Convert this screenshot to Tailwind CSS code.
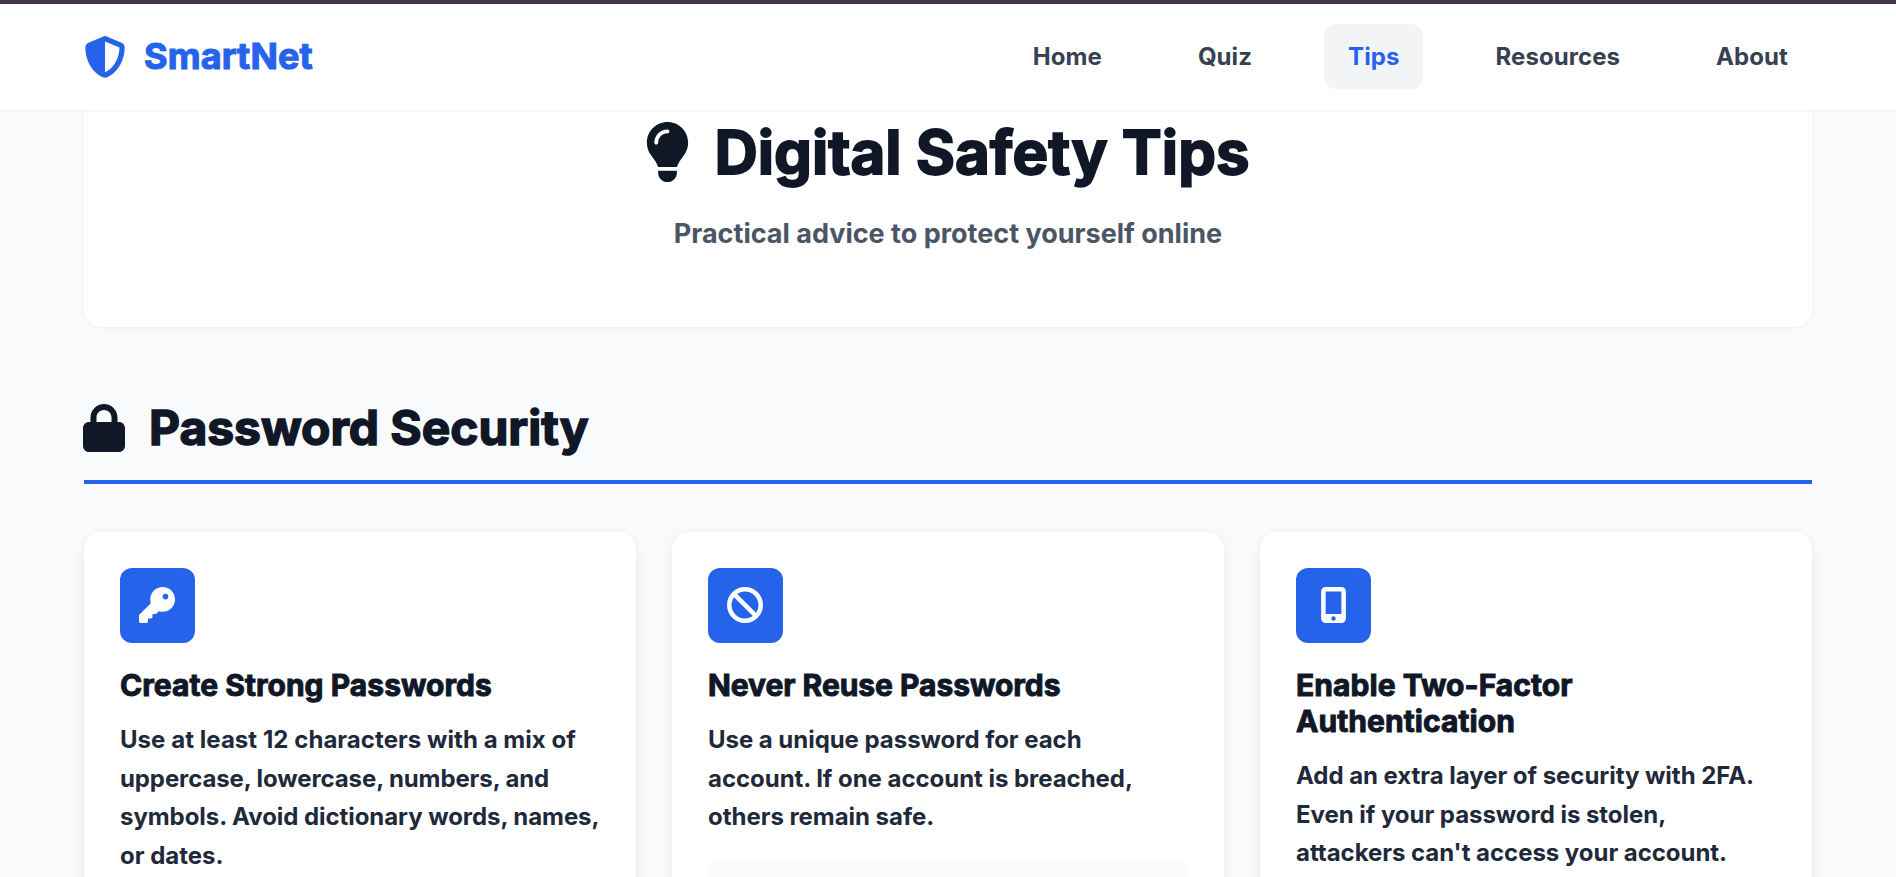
<!DOCTYPE html>
<html lang="en">
<head>
    <meta charset="UTF-8">
    <meta name="viewport" content="width=device-width, initial-scale=1.0">
    <title>Digital Safety Tips - SmartNet</title>

    <!-- Tailwind CSS -->
    <script src="https://cdn.jsdelivr.net/npm/@tailwindcss/browser@4"></script>
</head>
<body class="h-screen overflow-hidden bg-[#f9fafb] font-['Inter',sans-serif] font-bold text-[24px] leading-[38.6px] text-gray-800">

    <!-- Navbar -->
    <header class="relative z-10 h-[110px] border-t-4 border-[#433649] bg-white pb-px shadow-[0_1px_3px_rgba(0,0,0,0.06)]">
        <nav class="mx-auto flex h-full w-[1728px] items-center justify-between">
            <a href="#" class="flex items-center gap-[18px] text-[36px] leading-none text-[#2563eb]">
                <svg class="size-[42px]" viewBox="0 0 512 512" fill="currentColor"><path d="M256 0c4.600 0 9.200 1 13.400 2.900L457.700 82.800c22 9.300 38.400 31 38.300 57.200c-.5 99.200-41.300 280.700-213.600 363.200c-16.700 8-36.100 8-52.800 0C57.300 420.700 16.500 239.200 16 140c-.1-26.200 16.300-47.900 38.300-57.200L242.700 2.900C246.800 1 251.400 0 256 0zm0 66.800V444.800C394 378 431.100 230.100 432 141.400L256 66.800z"/></svg>
                <span class="-mt-px tracking-[0.1px] [-webkit-text-stroke:1.1px_currentColor]">SmartNet</span>
            </a>
            <ul class="flex items-center gap-12 tracking-[0.08px] text-[#374151]">
                <li><a href="#" class="flex h-[65px] items-center rounded-xl px-6 pt-0.5">Home</a></li>
                <li><a href="#" class="flex h-[65px] items-center rounded-xl px-6 pt-0.5">Quiz</a></li>
                <li><a href="#" class="flex h-[65px] items-center rounded-xl bg-gray-100 px-6 pt-0.5 text-[#2563eb]">Tips</a></li>
                <li><a href="#" class="flex h-[65px] items-center rounded-xl px-6 pt-0.5">Resources</a></li>
                <li><a href="#" class="flex h-[65px] items-center rounded-xl px-6 pt-0.5">About</a></li>
            </ul>
        </nav>
    </header>

    <main class="mx-auto w-[1728px]">
        <!-- Page title -->
        <section class="flex h-[217px] flex-col items-center rounded-b-[18px] bg-white pt-[6px] shadow-[0_1px_3px_rgba(0,0,0,0.06)]">
            <h1 class="flex items-center gap-6 pr-px text-[60px] leading-[72px] text-gray-900 [-webkit-text-stroke:1.8px_currentColor]">
                <svg class="-mt-px h-[60px] w-[45px]" viewBox="0 0 384 512" fill="currentColor"><path d="M272 384c9.600-31.900 29.500-59.100 49.200-86.200c5.200-7.100 10.400-14.200 15.400-21.400c19.800-28.500 31.400-63 31.400-100.300C368 78.800 289.200 0 192 0S16 78.800 16 176c0 37.300 11.600 71.900 31.400 100.300c5 7.200 10.200 14.300 15.400 21.400c19.800 27.100 39.700 54.400 49.200 86.200H272zM192 512c44.200 0 80-35.800 80-80V416H112v16c0 44.200 35.800 80 80 80zM112 176c0 8.800-7.200 16-16 16s-16-7.200-16-16c0-61.900 50.100-112 112-112c8.800 0 16 7.200 16 16s-7.200 16-16 16c-44.200 0-80 35.800-80 80z"/></svg>
                <span>Digital Safety Tips</span>
            </h1>
            <p class="mt-[27px] text-[27px] text-gray-600">Practical advice to protect yourself online</p>
        </section>

        <!-- Password security -->
        <section class="mt-[72px]">
            <h2 class="flex h-[85px] items-start border-b-4 border-[#2563eb] text-[48px] leading-[58px] tracking-[-0.04px] text-gray-900 [-webkit-text-stroke:1.5px_currentColor]">
                <svg class="-ml-px mt-[5px] mr-6 h-[48px] w-[42px]" viewBox="0 0 448 512" fill="currentColor"><path d="M144 144v48H304V144c0-44.200-35.800-80-80-80s-80 35.800-80 80zM80 192V144C80 64.500 144.500 0 224 0s144 64.500 144 144v48h16c35.300 0 64 28.700 64 64V448c0 35.300-28.700 64-64 64H64c-35.300 0-64-28.700-64-64V256c0-35.300 28.700-64 64-64H80z"/></svg>
                <span>Password Security</span>
            </h2>

            <div class="mt-12 grid grid-cols-3 gap-9">
                <article class="h-[500px] rounded-[18px] bg-white p-9 shadow-[0_4px_12px_rgba(0,0,0,0.08)]">
                    <div class="flex size-[75px] items-center justify-center rounded-xl bg-[#2563eb] pr-px pb-px text-white">
                        <svg class="size-9" viewBox="0 0 512 512" fill="currentColor"><path d="M336 352c97.200 0 176-78.800 176-176S433.200 0 336 0S160 78.800 160 176c0 18.700 2.900 36.800 8.300 53.700L7 391c-4.500 4.500-7 10.600-7 17v80c0 13.300 10.700 24 24 24h80c13.300 0 24-10.700 24-24V448h40c13.300 0 24-10.700 24-24V384h40c6.400 0 12.500-2.500 17-7l33.300-33.300c16.900 5.400 35 8.300 53.700 8.300zM376 96a40 40 0 1 1 0 80 40 40 0 1 1 0-80z"/></svg>
                    </div>
                    <h3 class="mt-6 text-[30px] leading-9 tracking-[0.04px] text-gray-900 [-webkit-text-stroke:1px_currentColor]">Create Strong Passwords</h3>
                    <p class="mt-[18px] whitespace-nowrap">
                        <span class="tracking-[0.05px]">Use at least 12 characters with a mix of</span><br>
                        <span class="tracking-[-0.1px]">uppercase, lowercase, numbers, and</span><br>
                        <span class="tracking-[-0.06px]">symbols. Avoid dictionary words, names,</span><br>
                        or dates.
                    </p>
                </article>
                <article class="h-[500px] rounded-[18px] bg-white p-9 shadow-[0_4px_12px_rgba(0,0,0,0.08)]">
                    <div class="flex size-[75px] items-center justify-center rounded-xl bg-[#2563eb] pr-px pb-px text-white">
                        <svg class="size-9" viewBox="0 0 512 512" fill="currentColor"><path d="M367.200 412.500L99.500 144.800C77.100 176.100 64 214.500 64 256c0 106 86 192 192 192c41.500 0 79.900-13.100 111.200-35.500zm45.300-45.300C434.900 335.900 448 297.500 448 256c0-106-86-192-192-192c-41.500 0-79.900 13.100-111.200 35.500L412.500 367.200zM0 256a256 256 0 1 1 512 0A256 256 0 1 1 0 256z"/></svg>
                    </div>
                    <h3 class="mt-6 text-[30px] leading-9 tracking-[-0.04px] text-gray-900 [-webkit-text-stroke:1px_currentColor]">Never Reuse Passwords</h3>
                    <p class="mt-[18px] tracking-[-0.04px]">Use a unique password for each account. If one account is breached, others remain safe.</p>
                    <div class="mt-6 h-32 rounded-[9px] bg-[#f9fafb]"></div>
                </article>
                <article class="h-[500px] rounded-[18px] bg-white p-9 shadow-[0_4px_12px_rgba(0,0,0,0.08)]">
                    <div class="flex size-[75px] items-center justify-center rounded-xl bg-[#2563eb] pr-px pb-px text-white">
                        <svg class="h-9 w-[27px]" viewBox="0 0 384 512" fill="currentColor"><path d="M16 64C16 28.700 44.700 0 80 0H304c35.300 0 64 28.700 64 64V448c0 35.300-28.700 64-64 64H80c-35.300 0-64-28.700-64-64V64zM224 448a32 32 0 1 0-64 0 32 32 0 1 0 64 0zM304 64H80V384H304V64z"/></svg>
                    </div>
                    <h3 class="mt-6 text-[30px] leading-9 tracking-[0.06px] text-gray-900 [-webkit-text-stroke:1px_currentColor]">Enable Two-Factor Authentication</h3>
                    <p class="mt-[18px] tracking-[-0.04px]">Add an extra layer of security with 2FA. Even if your password is stolen, attackers can't access your account.</p>
                </article>
            </div>
        </section>
    </main>
</body>
</html>
